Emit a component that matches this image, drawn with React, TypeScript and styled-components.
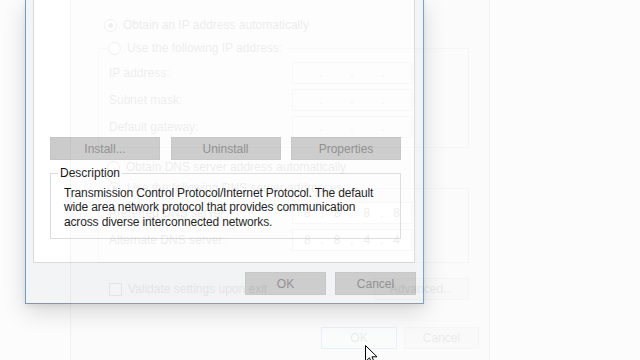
import React from 'react';
import styled, { createGlobalStyle } from 'styled-components';

const GlobalStyle = createGlobalStyle`
  html, body {
    margin: 0;
    padding: 0;
    width: 640px;
    height: 360px;
    overflow: hidden;
    background: #fcfcfc;
  }
  body {
    font-family: "Liberation Sans", Arial, sans-serif;
    font-size: 12px;
    color: #111;
  }
`;

const Desktop = styled.div`
  position: relative;
  width: 640px;
  height: 360px;
  overflow: hidden;
  background: #fcfcfc;
`;

/* front window: Ethernet properties, top part is off screen */
const Window = styled.div`
  position: absolute;
  left: 25px;
  top: -1px;
  width: 399px;
  height: 305px;
  box-sizing: border-box;
  border: 1px solid #6e9ccb;
  background: #f3f4f5;
  box-shadow: 0 8px 22px rgba(0, 0, 0, 0.15), 0 2px 5px rgba(0, 0, 0, 0.07);
  display: flex;
  flex-direction: column;
  padding: 0 8px 0 7px;
`;

const Panel = styled.div`
  height: 263px;
  box-sizing: border-box;
  background: #fff;
  border: 1px solid #dadada;
  border-top: none;
  display: flex;
  flex-direction: column;
  padding: 137px 13px 0 16px;
`;

const ButtonRow = styled.div`
  display: flex;
  justify-content: space-between;
`;

const Button = styled.button<{ $w: number }>`
  width: ${(p) => p.$w}px;
  height: 23px;
  padding: 0;
  box-sizing: border-box;
  background: #cbcbcb;
  border: 1px solid #c4c4c4;
  color: #8a8a8a;
  font-family: "Liberation Sans", Arial, sans-serif;
  font-size: 12px;
`;

const GroupBox = styled.div`
  margin-top: 13px;
  padding: 0 10px 9px 13px;
  border: 1px solid #dcdcdc;
  display: flex;
  flex-direction: column;
`;

const GroupLabel = styled.div`
  align-self: flex-start;
  margin: -8px 0 0 -6px;
  padding: 0 2px;
  line-height: 14px;
  background: #fff;
  color: #111;
`;

const DescText = styled.div`
  margin-top: 6px;
  line-height: 14.4px;
  letter-spacing: -0.15px;
  color: #111;
  white-space: nowrap;
`;

const Footer = styled.div`
  display: flex;
  justify-content: flex-end;
  gap: 9px;
  padding: 9px 0 0 0;
  margin-right: -1px;
`;

/* ghost window: IPv4 properties fading in on top */
const Ghost = styled.div`
  position: absolute;
  left: 70px;
  top: 0;
  width: 420px;
  height: 380px;
  box-sizing: border-box;
  border: 1px solid #777;
  border-top: none;
  background: #f0f0f0;
  opacity: 0.075;
  pointer-events: none;
  display: flex;
  flex-direction: column;
  padding: 15px 20px 0 27px;
`;

const RadioRow = styled.div<{ $indent?: number; $top?: number }>`
  height: 20px;
  display: flex;
  align-items: center;
  gap: 6px;
  margin: ${(p) => p.$top ?? 0}px 0 0 ${(p) => p.$indent ?? 6}px;
  color: #000;
`;

const Radio = styled.span<{ $on?: boolean }>`
  width: 11px;
  height: 11px;
  border-radius: 50%;
  border: 1px solid #333;
  background: #fff;
  display: inline-flex;
  align-items: center;
  justify-content: center;
  &::after {
    content: '';
    width: 5px;
    height: 5px;
    border-radius: 50%;
    background: ${(p) => (p.$on ? '#333' : 'transparent')};
  }
`;

const GhostGroup = styled.fieldset<{ $top: number; $bottom: number }>`
  margin: ${(p) => p.$top}px 0 0 0;
  padding: 4px 0 ${(p) => p.$bottom}px 10px;
  border: 1px solid #aaa;
  display: flex;
  flex-direction: column;
  gap: 5px;
  min-width: 0;
`;

const GhostLegend = styled.legend`
  padding: 0 4px 0 0;
  margin-left: 0;
  height: 20px;
  display: flex;
  align-items: center;
  gap: 6px;
  position: relative;
  left: -1px;
`;

const FieldRow = styled.div`
  display: grid;
  grid-template-columns: 183px 120px;
  align-items: center;
  height: 22px;
`;

const IpBox = styled.div<{ $disabled?: boolean }>`
  height: 22px;
  box-sizing: border-box;
  border: 1px solid #999;
  background: ${(p) => (p.$disabled ? '#f0f0f0' : '#fff')};
  display: flex;
  justify-content: space-around;
  align-items: center;
  padding: 0 6px;
`;

const BottomRow = styled.div`
  margin-top: 14px;
  height: 24px;
  display: flex;
  align-items: center;
  padding-left: 11px;
  gap: 6px;
`;

const Check = styled.span`
  width: 11px;
  height: 11px;
  border: 1px solid #333;
  background: #fff;
`;

const GhostButton = styled.div<{ $w: number; $primary?: boolean }>`
  width: ${(p) => p.$w}px;
  height: 22px;
  box-sizing: border-box;
  border: 1px solid ${(p) => (p.$primary ? '#0078d7' : '#adadad')};
  background: ${(p) => (p.$primary ? '#e5f1fb' : '#e1e1e1')};
  display: flex;
  align-items: center;
  justify-content: center;
`;

const Spacer = styled.div`
  flex: 1;
`;

const GhostFooter = styled.div`
  margin: 26px -10px 0 0;
  display: flex;
  justify-content: flex-end;
  gap: 7px;
`;

const Cursor = styled.svg`
  position: absolute;
  left: 365px;
  top: 345px;
`;

function Ip({ parts, disabled }: { parts: string[]; disabled?: boolean }) {
  return (
    <IpBox $disabled={disabled}>
      {parts.map((p, i) => (
        <React.Fragment key={i}>
          {i > 0 && <span>.</span>}
          <span>{p}</span>
        </React.Fragment>
      ))}
    </IpBox>
  );
}

export default function App() {
  return (
    <>
      <GlobalStyle />
      <Desktop>
        <Window>
          <Panel>
            <ButtonRow>
              <Button $w={110}>Install...</Button>
              <Button $w={110}>Uninstall</Button>
              <Button $w={110}>Properties</Button>
            </ButtonRow>
            <GroupBox>
              <GroupLabel>Description</GroupLabel>
              <DescText>
                Transmission Control Protocol/Internet Protocol. The default
                <br />
                wide area network protocol that provides communication
                <br />
                across diverse interconnected networks.
              </DescText>
            </GroupBox>
          </Panel>
          <Footer>
            <Button $w={81}>OK</Button>
            <Button $w={81}>Cancel</Button>
          </Footer>
        </Window>

        <Ghost>
          <RadioRow>
            <Radio $on />
            Obtain an IP address automatically
          </RadioRow>
          <GhostGroup $top={3} $bottom={9}>
            <GhostLegend>
              <Radio />
              Use the following IP address:
            </GhostLegend>
            <FieldRow>
              <span>IP address:</span>
              <Ip parts={['', '', '', '']} disabled />
            </FieldRow>
            <FieldRow>
              <span>Subnet mask:</span>
              <Ip parts={['', '', '', '']} disabled />
            </FieldRow>
            <FieldRow>
              <span>Default gateway:</span>
              <Ip parts={['', '', '', '']} disabled />
            </FieldRow>
          </GhostGroup>
          <RadioRow $indent={9} $top={9}>
            <Radio />
            Obtain DNS server address automatically
          </RadioRow>
          <GhostGroup $top={1} $bottom={11}>
            <GhostLegend>
              <Radio $on />
              Use the following DNS server addresses:
            </GhostLegend>
            <FieldRow>
              <span>Preferred DNS server:</span>
              <Ip parts={['8', '8', '8', '8']} />
            </FieldRow>
            <FieldRow>
              <span>Alternate DNS server:</span>
              <Ip parts={['8', '8', '4', '4']} />
            </FieldRow>
          </GhostGroup>
          <BottomRow>
            <Check />
            Validate settings upon exit
            <Spacer />
            <GhostButton $w={95}>Advanced...</GhostButton>
          </BottomRow>
          <GhostFooter>
            <GhostButton $w={76} $primary>
              OK
            </GhostButton>
            <GhostButton $w={75}>Cancel</GhostButton>
          </GhostFooter>
        </Ghost>

        <Cursor width="13" height="20" viewBox="0 0 13 20">
          <path
            d="M0.5 0.5 L0.5 16.5 L4.5 12.8 L7.2 19 L9.6 18 L7 11.8 L12 11.8 Z"
            fill="#fff"
            stroke="#000"
            strokeWidth="1"
            strokeLinejoin="miter"
          />
        </Cursor>
      </Desktop>
    </>
  );
}
